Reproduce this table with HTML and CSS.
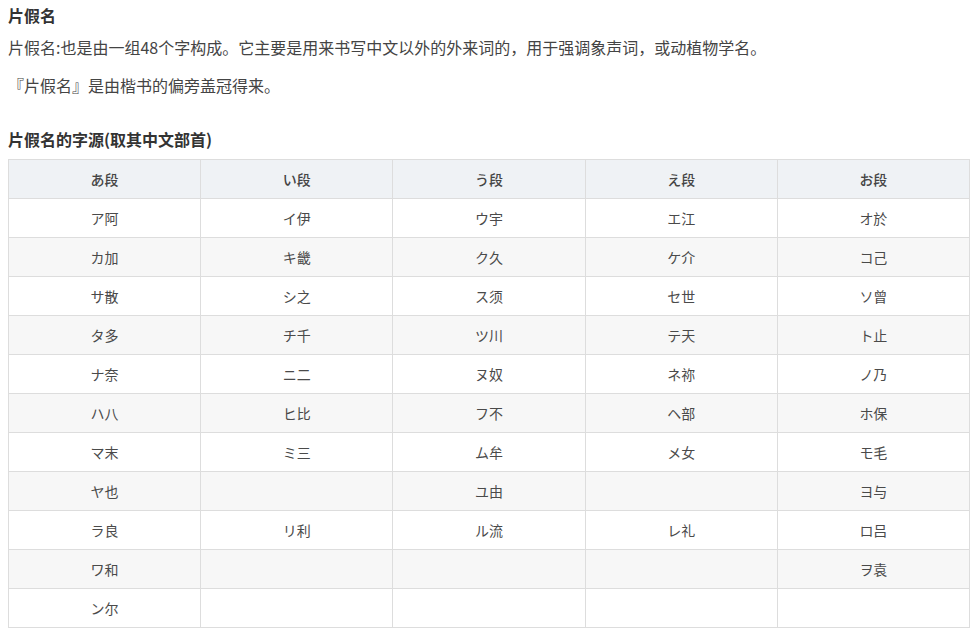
FILE: index.html
```html
<!DOCTYPE html>
<html lang="zh-CN">
<head>
<meta charset="utf-8">
<title>片假名</title>
<link rel="stylesheet" href="styles.css">
</head>
<body>
<div class="page">
  <h3 class="title">片假名</h3>
  <p class="text">片假名:也是由一组48个字构成。它主要是用来书写中文以外的外来词的，用于强调象声词，或动植物学名。</p>
  <p class="text">『片假名』是由楷书的偏旁盖冠得来。</p>
  <h3 class="subtitle">片假名的字源(取其中文部首)</h3>
  <table class="kana">
    <thead>
      <tr><th>あ段</th><th>い段</th><th>う段</th><th>え段</th><th>お段</th></tr>
    </thead>
    <tbody>
      <tr><td>ア阿</td><td>イ伊</td><td>ウ宇</td><td>エ江</td><td>オ於</td></tr>
      <tr><td>カ加</td><td>キ畿</td><td>ク久</td><td>ケ介</td><td>コ己</td></tr>
      <tr><td>サ散</td><td>シ之</td><td>ス须</td><td>セ世</td><td>ソ曾</td></tr>
      <tr><td>タ多</td><td>チ千</td><td>ツ川</td><td>テ天</td><td>ト止</td></tr>
      <tr><td>ナ奈</td><td>ニ二</td><td>ヌ奴</td><td>ネ祢</td><td>ノ乃</td></tr>
      <tr><td>ハ八</td><td>ヒ比</td><td>フ不</td><td>ヘ部</td><td>ホ保</td></tr>
      <tr><td>マ末</td><td>ミ三</td><td>ム牟</td><td>メ女</td><td>モ毛</td></tr>
      <tr><td>ヤ也</td><td></td><td>ユ由</td><td></td><td>ヨ与</td></tr>
      <tr><td>ラ良</td><td>リ利</td><td>ル流</td><td>レ礼</td><td>ロ吕</td></tr>
      <tr><td>ワ和</td><td></td><td></td><td></td><td>ヲ袁</td></tr>
      <tr><td>ン尔</td><td></td><td></td><td></td><td></td></tr>
    </tbody>
  </table>
</div>
</body>
</html>
```
FILE: styles.css
```css
html, body {
  margin: 0;
  padding: 0;
  background: #fff;
}
body {
  font-family: "Noto Sans CJK SC", "Noto Sans", sans-serif;
  color: #333;
  font-size: 16px;
}
.page {
  padding: 4px 8px 0 8px;
}
.title {
  font-size: 16px;
  font-weight: 700;
  line-height: 22px;
  margin: 0 0 9px 0;
  color: #333;
}
.text {
  font-size: 16px;
  line-height: 24px;
  margin: 0 0 14px 0;
  color: #444;
}
.subtitle {
  font-size: 16px;
  font-weight: 700;
  line-height: 22px;
  margin: 31px 0 9px 0;
  color: #333;
}
.kana {
  width: 962px;
  border-collapse: collapse;
  table-layout: fixed;
  font-size: 14px;
}
.kana th, .kana td {
  border: 1px solid #ddd;
  height: 38px;
  padding: 0;
  text-align: center;
  vertical-align: middle;
  line-height: 18px;
  color: #4a4a4a;
}
.kana th {
  background: #eff2f5;
  font-weight: 500;
  color: #444;
}
.kana tbody tr:nth-child(even) td {
  background: #f7f7f7;
}
```
